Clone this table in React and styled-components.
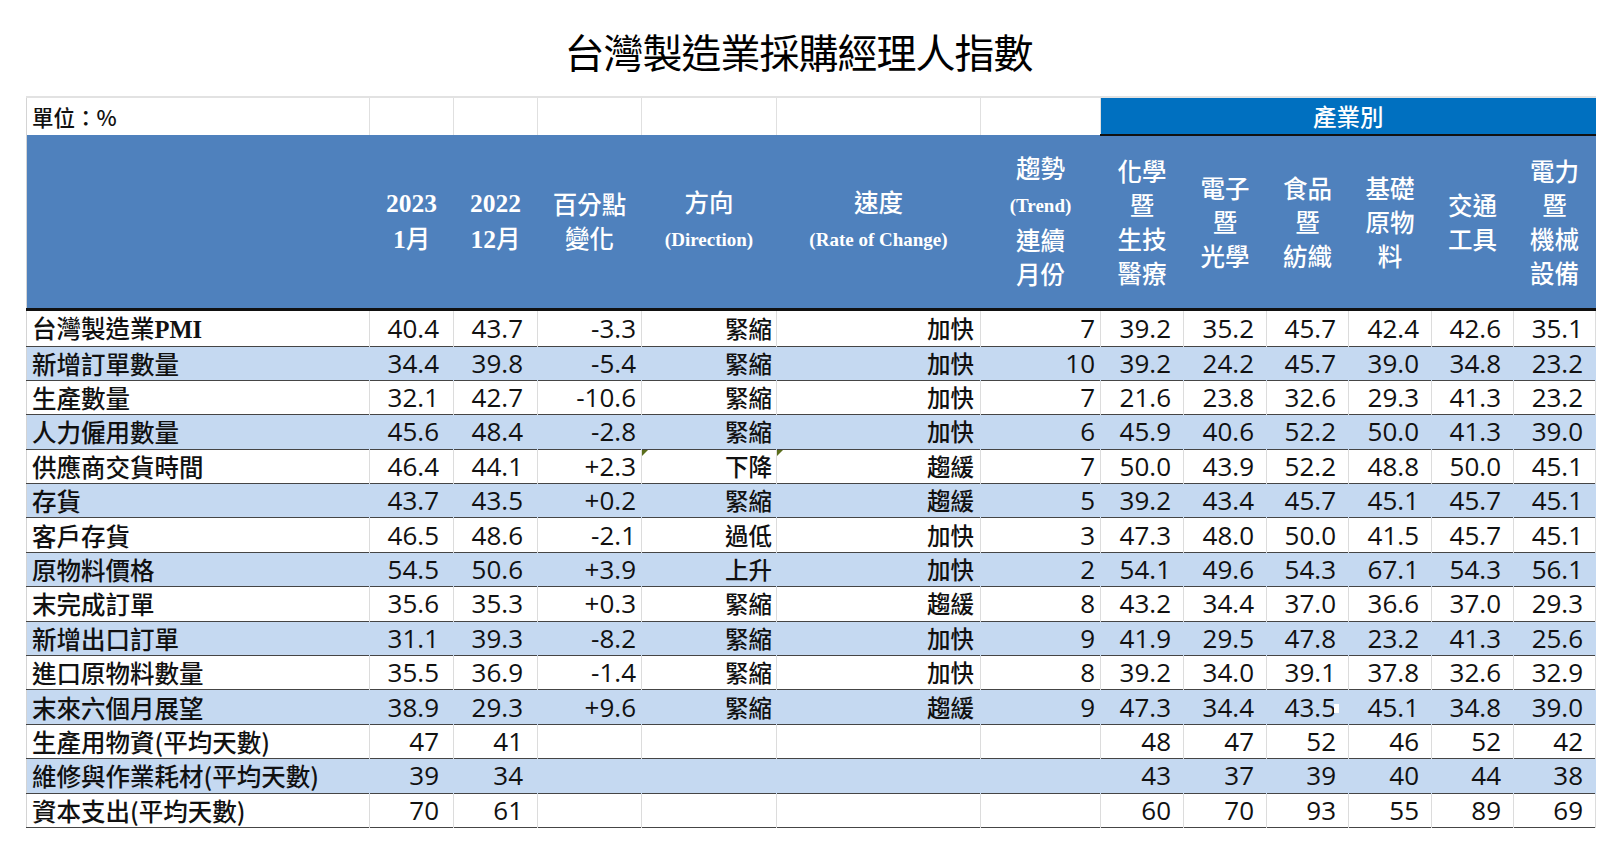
import React from 'react';
import styled, { createGlobalStyle } from 'styled-components';

const GlobalStyle = createGlobalStyle`
  body {
    margin: 0;
    background: #ffffff;
  }
`;

const Page = styled.div`
  padding-left: 26px;
  width: 1567px;
  font-family: "Noto Sans CJK TC", sans-serif;
  color: #111;
`;

const Title = styled.h1`
  margin: 0 22px 0 0;
  height: 96px;
  padding-top: 6px;
  box-sizing: border-box;
  display: flex;
  align-items: center;
  justify-content: center;
  font-size: 40px;
  font-weight: 400;
  color: #000;
  letter-spacing: -1px;
`;

const Table = styled.table`
  width: 1567px;
  table-layout: fixed;
  border-collapse: collapse;
  border-left: 1px solid #d4d4d4;
`;

const UnitRow = styled.tr`
  height: 35px;
  border-top: 2px solid #e2e2e2;
`;

const UnitCell = styled.td`
  padding: 0 0 0 5px;
  background: #fff;
  border-right: 1px solid #e0e0e0;
  font-size: 21.5px;
  font-weight: 500;
  white-space: nowrap;
`;

const SectorCell = styled.td`
  background: #0070c0;
  color: #fff;
  text-align: center;
  font-size: 23.5px;
  font-weight: 500;
  border-bottom: 2px solid #111;
`;

const HeadRow = styled.tr`
  height: 174px;
  background: #4f81bd;
  border-bottom: 3px solid #111;
`;

const HeadCell = styled.th`
  padding: 0;
  color: #fff;
  font-size: 24.5px;
  font-weight: 500;
  line-height: 34px;
  text-align: center;
  vertical-align: middle;
`;

const Serif = styled.span`
  font-family: "Liberation Serif", "Times New Roman", serif;
  font-weight: 700;
  font-size: ${(p) => p.$size || 25.5}px;
`;

const Row = styled.tr`
  height: 34.4px;
  background: ${(p) => (p.$shade ? '#c5d9f1' : '#ffffff')};
  border-bottom: 1px solid #454545;

  td {
    border-right: 1px solid ${(p) => (p.$shade ? '#c5d9f1' : '#dcdcdc')};
  }
`;

const Label = styled.td`
  padding: 0 0 0 5px;
  font-size: 24.5px;
  font-weight: 500;
  line-height: 33px;
  white-space: nowrap;
`;

const Num = styled.td`
  position: relative;
  padding: 0 ${(p) => p.$pad}px 0 0;
  text-align: right;
  font-family: "Open Sans", "Noto Sans CJK TC", sans-serif;
  font-size: 26px;
  line-height: 33px;
  white-space: nowrap;
`;

const Word = styled(Num)`
  font-family: "Noto Sans CJK TC", sans-serif;
  font-size: 23.5px;
  font-weight: 500;
`;

const Flag = styled.span`
  position: absolute;
  left: 0;
  top: 0;
  width: 0;
  height: 0;
  border-top: 6px solid #5b6e1c;
  border-right: 6px solid transparent;
`;

const Speck = styled.span`
  position: absolute;
  right: 9px;
  top: 14px;
  width: 5px;
  height: 9px;
  background: #fff;
`;

const widths = [343, 84, 84, 104, 135, 204, 120, 83, 83, 82, 83, 82, 82];

const rows = [
  ['台灣製造業', 'PMI', '40.4', '43.7', '-3.3', '緊縮', '加快', '7', '39.2', '35.2', '45.7', '42.4', '42.6', '35.1'],
  ['新增訂單數量', '', '34.4', '39.8', '-5.4', '緊縮', '加快', '10', '39.2', '24.2', '45.7', '39.0', '34.8', '23.2'],
  ['生產數量', '', '32.1', '42.7', '-10.6', '緊縮', '加快', '7', '21.6', '23.8', '32.6', '29.3', '41.3', '23.2'],
  ['人力僱用數量', '', '45.6', '48.4', '-2.8', '緊縮', '加快', '6', '45.9', '40.6', '52.2', '50.0', '41.3', '39.0'],
  ['供應商交貨時間', '', '46.4', '44.1', '+2.3', '下降', '趨緩', '7', '50.0', '43.9', '52.2', '48.8', '50.0', '45.1'],
  ['存貨', '', '43.7', '43.5', '+0.2', '緊縮', '趨緩', '5', '39.2', '43.4', '45.7', '45.1', '45.7', '45.1'],
  ['客戶存貨', '', '46.5', '48.6', '-2.1', '過低', '加快', '3', '47.3', '48.0', '50.0', '41.5', '45.7', '45.1'],
  ['原物料價格', '', '54.5', '50.6', '+3.9', '上升', '加快', '2', '54.1', '49.6', '54.3', '67.1', '54.3', '56.1'],
  ['末完成訂單', '', '35.6', '35.3', '+0.3', '緊縮', '趨緩', '8', '43.2', '34.4', '37.0', '36.6', '37.0', '29.3'],
  ['新增出口訂單', '', '31.1', '39.3', '-8.2', '緊縮', '加快', '9', '41.9', '29.5', '47.8', '23.2', '41.3', '25.6'],
  ['進口原物料數量', '', '35.5', '36.9', '-1.4', '緊縮', '加快', '8', '39.2', '34.0', '39.1', '37.8', '32.6', '32.9'],
  ['末來六個月展望', '', '38.9', '29.3', '+9.6', '緊縮', '趨緩', '9', '47.3', '34.4', '43.5', '45.1', '34.8', '39.0'],
  ['生產用物資(平均天數)', '', '47', '41', '', '', '', '', '48', '47', '52', '46', '52', '42'],
  ['維修與作業耗材(平均天數)', '', '39', '34', '', '', '', '', '43', '37', '39', '40', '44', '38'],
  ['資本支出(平均天數)', '', '70', '61', '', '', '', '', '60', '70', '93', '55', '89', '69'],
];

const pads = [14, 14, 5, 4, 6, 5, 12, 12, 12, 12, 12, 12];

const sectors = [
  ['化學', '暨', '生技', '醫療'],
  ['電子', '暨', '光學'],
  ['食品', '暨', '紡織'],
  ['基礎', '原物', '料'],
  ['交通', '工具'],
  ['電力', '暨', '機械', '設備'],
];

const Lines = ({ lines }) =>
  lines.map((l, i) => (
    <React.Fragment key={i}>
      {i > 0 && <br />}
      {l}
    </React.Fragment>
  ));

export default function App() {
  return (
    <Page>
      <GlobalStyle />
      <Title>台灣製造業採購經理人指數</Title>
      <Table>
        <colgroup>
          {widths.map((w, i) => (
            <col key={i} style={{ width: w }} />
          ))}
        </colgroup>
        <tbody>
          <UnitRow>
            <UnitCell>單位：%</UnitCell>
            <UnitCell />
            <UnitCell />
            <UnitCell />
            <UnitCell />
            <UnitCell />
            <UnitCell />
            <SectorCell colSpan={6}>產業別</SectorCell>
          </UnitRow>
          <HeadRow>
            <HeadCell />
            <HeadCell>
              <Serif>2023</Serif>
              <br />
              <Serif>1</Serif>月
            </HeadCell>
            <HeadCell>
              <Serif>2022</Serif>
              <br />
              <Serif>12</Serif>月
            </HeadCell>
            <HeadCell>
              百分點
              <br />
              變化
            </HeadCell>
            <HeadCell>
              方向
              <br />
              <Serif $size={19}>(Direction)</Serif>
            </HeadCell>
            <HeadCell>
              速度
              <br />
              <Serif $size={19}>(Rate of Change)</Serif>
            </HeadCell>
            <HeadCell>
              趨勢
              <br />
              <Serif $size={19}>(Trend)</Serif>
              <br />
              連續
              <br />
              月份
            </HeadCell>
            {sectors.map((s, i) => (
              <HeadCell key={i}>
                <Lines lines={s} />
              </HeadCell>
            ))}
          </HeadRow>
          {rows.map((r, ri) => {
            const [label, latin, ...vals] = r;
            return (
              <Row key={ri} $shade={ri % 2 === 1}>
                <Label>
                  {label}
                  {latin && <Serif $size={24.5}>{latin}</Serif>}
                </Label>
                {vals.map((v, ci) => {
                  const Cell = ci === 3 || ci === 4 ? Word : Num;
                  return (
                    <Cell key={ci} $pad={pads[ci]}>
                      {ri === 4 && (ci === 3 || ci === 4) && <Flag />}
                      {ri === 11 && ci === 8 && <Speck />}
                      {v}
                    </Cell>
                  );
                })}
              </Row>
            );
          })}
        </tbody>
      </Table>
    </Page>
  );
}
